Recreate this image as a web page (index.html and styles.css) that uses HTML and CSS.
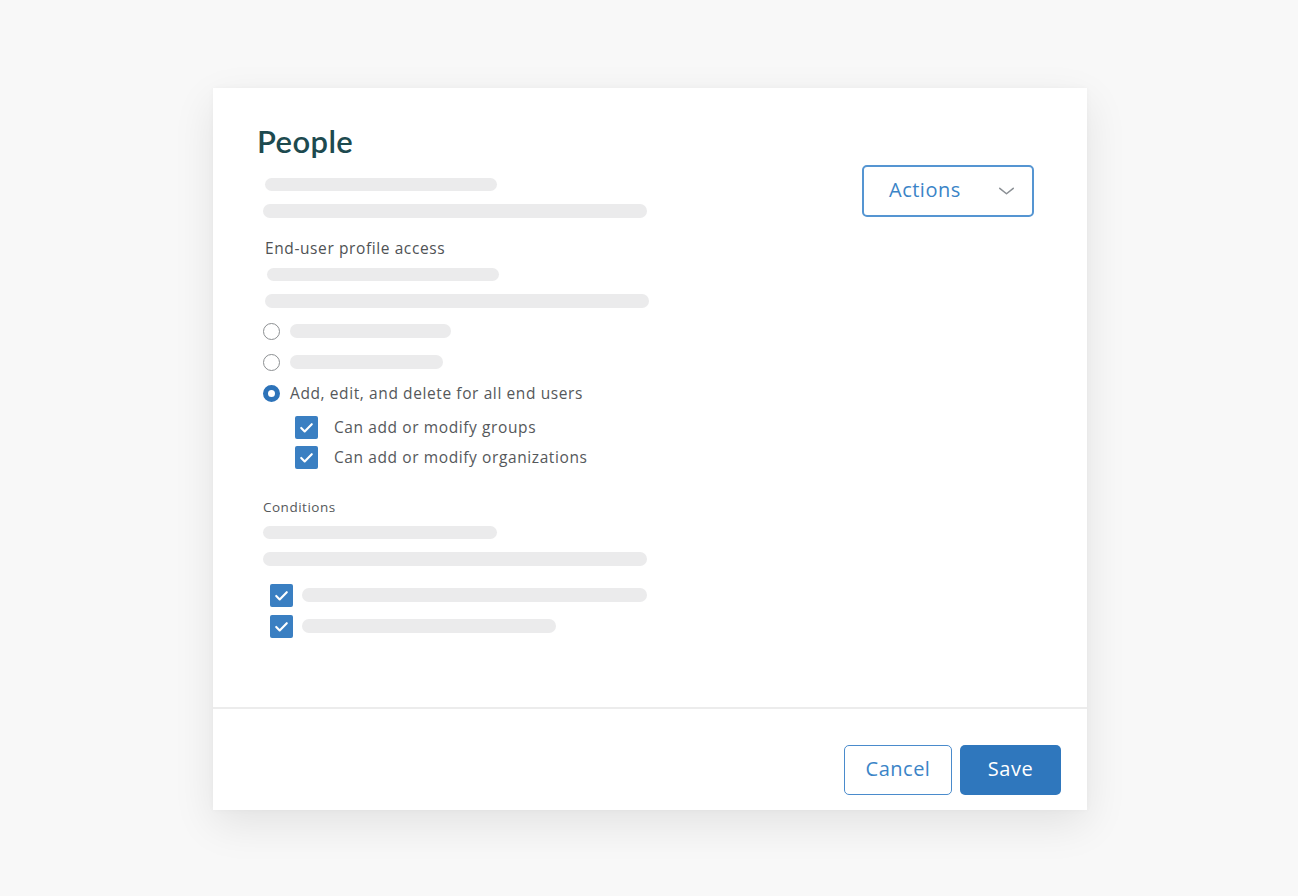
FILE: index.html
```html
<!DOCTYPE html>
<html>
<head>
<meta charset="utf-8">
<link rel="stylesheet" href="styles.css">
</head>
<body>
<div class="card">
  <div class="card-body">
    <div class="content">
      <h1 class="title">People</h1>
      <div class="bar bar-a1" style="width:232px"></div>
      <div class="bar bar-a2" style="width:384px"></div>
      <div class="label">End-user profile access</div>
      <div class="bar bar-b1" style="width:232px"></div>
      <div class="bar bar-b2" style="width:384px"></div>
      <div class="radio-row first">
        <span class="radio"></span>
        <div class="bar row-bar" style="width:161px"></div>
      </div>
      <div class="radio-row">
        <span class="radio"></span>
        <div class="bar row-bar" style="width:153px"></div>
      </div>
      <div class="radio-row">
        <span class="radio checked"></span>
        <span class="row-text">Add, edit, and delete for all end users</span>
      </div>
      <div class="check-row sub first">
        <span class="checkbox"><svg viewBox="0 0 24 24" width="23" height="23"><path d="M6.5 12.5l3.6 3.6 7.4-7.6" fill="none" stroke="#fff" stroke-width="2.2" stroke-linecap="round" stroke-linejoin="round"/></svg></span>
        <span class="row-text">Can add or modify groups</span>
      </div>
      <div class="check-row sub">
        <span class="checkbox"><svg viewBox="0 0 24 24" width="23" height="23"><path d="M6.5 12.5l3.6 3.6 7.4-7.6" fill="none" stroke="#fff" stroke-width="2.2" stroke-linecap="round" stroke-linejoin="round"/></svg></span>
        <span class="row-text">Can add or modify organizations</span>
      </div>
      <div class="label small">Conditions</div>
      <div class="bar bar-c1" style="width:234px"></div>
      <div class="bar bar-c2" style="width:384px"></div>
      <div class="check-row cond first">
        <span class="checkbox"><svg viewBox="0 0 24 24" width="23" height="23"><path d="M6.5 12.5l3.6 3.6 7.4-7.6" fill="none" stroke="#fff" stroke-width="2.2" stroke-linecap="round" stroke-linejoin="round"/></svg></span>
        <div class="bar row-bar" style="width:345px"></div>
      </div>
      <div class="check-row cond">
        <span class="checkbox"><svg viewBox="0 0 24 24" width="23" height="23"><path d="M6.5 12.5l3.6 3.6 7.4-7.6" fill="none" stroke="#fff" stroke-width="2.2" stroke-linecap="round" stroke-linejoin="round"/></svg></span>
        <div class="bar row-bar" style="width:254px"></div>
      </div>
    </div>
    <button class="btn actions">
      <span>Actions</span>
      <svg viewBox="0 0 18 10" width="17" height="9"><path d="M1.5 1.5l7.5 6 7.5-6" fill="none" stroke="#8a8f94" stroke-width="1.7" stroke-linecap="round" stroke-linejoin="round"/></svg>
    </button>
  </div>
  <div class="divider"></div>
  <div class="card-footer">
    <button class="btn cancel">Cancel</button>
    <button class="btn save">Save</button>
  </div>
</div>
</body>
</html>
```
FILE: styles.css
```css
* { box-sizing: border-box; }
html, body { margin: 0; padding: 0; }
body {
  background: #f8f8f8;
  font-family: "Open Sans", "Liberation Sans", sans-serif;
  width: 1298px;
  height: 896px;
  overflow: hidden;
  padding-top: 88px;
}
.card {
  margin-left: 213px;
  width: 874px;
  height: 722px;
  background: #fff;
  box-shadow: 0 14px 40px rgba(0,0,0,0.09), 0 0 6px rgba(0,0,0,0.03);
  display: flex;
  flex-direction: column;
}
.card-body {
  height: 619px;
  padding: 36px 53px 0 50px;
  display: flex;
  justify-content: space-between;
  align-items: flex-start;
}
.content {
  width: 400px;
  display: flex;
  flex-direction: column;
  align-items: flex-start;
}
.title {
  margin: 0 0 0 -6px;
  font-family: "Lato", "Open Sans", sans-serif;
  font-weight: 600;
  font-size: 31px;
  line-height: 34px;
  color: #1d4a4f;
  letter-spacing: 0.4px;
}
.bar {
  background: #ebebec;
  height: 14px;
  border-radius: 7px;
}
.bar-a1 { margin: 20px 0 0 2px; height: 13px; }
.bar-a2 { margin-top: 13px; }
.label {
  margin: 20px 0 0 2px;
  font-size: 15.5px;
  line-height: 20px;
  letter-spacing: 0.6px;
  color: #4f5255;
}
.label.small {
  margin: 29px 0 0 0;
  font-size: 13.5px;
  line-height: 18px;
  letter-spacing: 0.5px;
  color: #55585b;
}
.bar-b1 { margin: 10px 0 0 4px; height: 13px; }
.bar-b2 { margin: 13px 0 0 2px; }
.bar-c1 { margin-top: 10px; height: 13px; }
.bar-c2 { margin-top: 13px; }
.radio-row, .check-row {
  display: flex;
  align-items: center;
  height: 24px;
}
.radio-row { margin-top: 7px; }
.radio-row.first { margin-top: 11px; }
.radio {
  width: 17px;
  height: 17px;
  border-radius: 50%;
  border: 1.5px solid #8c8f92;
  margin-right: 10px;
  flex: none;
}
.radio.checked {
  border: 5.5px solid #2d73b9;
  background: #fff;
}
.row-text {
  font-size: 15.5px;
  color: #55585b;
  line-height: 20px;
  letter-spacing: 0.6px;
}
.checkbox {
  width: 23px;
  height: 23px;
  border-radius: 2px;
  background: #3a7fc2;
  flex: none;
  display: flex;
}
.check-row.sub { margin: 6px 0 0 32px; }
.check-row.sub.first { margin-top: 10px; }
.check-row.sub .checkbox { margin-right: 16px; }
.check-row.cond { margin: 7px 0 0 7px; }
.check-row.cond.first { margin-top: 17px; }
.check-row.cond .checkbox { margin-right: 9px; }
.btn {
  font-family: "Open Sans", "Liberation Sans", sans-serif;
  font-size: 20px;
  letter-spacing: 0.5px;
  border-radius: 5px;
  cursor: pointer;
  background: #fff;
  padding: 0 0 3px 0;
}
.actions {
  margin-top: 41px;
  width: 172px;
  height: 52px;
  border: 2px solid #5595d2;
  color: #3b84c7;
  display: flex;
  align-items: center;
  justify-content: space-between;
  padding: 0 17px 3px 25px;
}
.actions svg { margin-top: 3px; }
.divider {
  height: 2px;
  background: #ececec;
}
.card-footer {
  flex: 1;
  display: flex;
  justify-content: flex-end;
  align-items: flex-start;
  padding: 36px 26px 0 0;
  gap: 8px;
}
.cancel {
  width: 108px;
  height: 50px;
  border: 1.5px solid #4a8bcc;
  color: #3b84c7;
}
.save {
  width: 101px;
  height: 50px;
  border: none;
  background: #2f77bd;
  color: #fff;
}
```
